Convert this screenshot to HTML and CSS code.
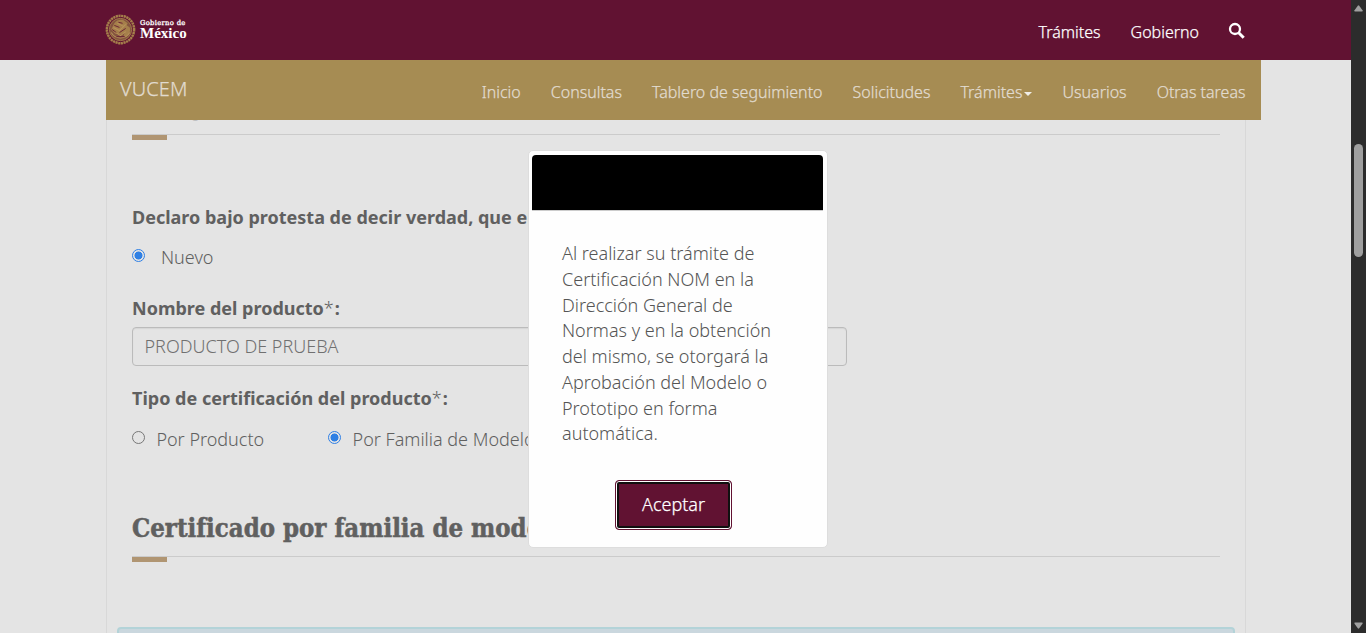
FILE: index.html
```html
<!DOCTYPE html>
<html lang="es">
<head>
<meta charset="utf-8">
<title>VUCEM</title>
<link rel="stylesheet" href="styles.css">
</head>
<body>
<div class="window">
  <div class="viewport">
    <header class="gov-bar">
      <a class="brand">
        <svg class="seal" viewBox="0 0 30 30">
          <circle cx="15" cy="15" r="13.2" fill="none" stroke="#a57f4b" stroke-width="2.4" stroke-dasharray="2.1 .5"/>
          <circle cx="15" cy="15" r="10.8" fill="#84543f" stroke="#a57f4b" stroke-width=".8"/>
          <path d="M9 9c2-3 6-4 9-3l4 3-1 2 3 2c1 4-1 7-4 9l-2-1 1-3-4 2-5-1-4-4z" fill="#a57f4b"/>
          <path d="M6 18c4 7 14 7 18 0M8 13l6 3 6-6M9 17l6 4 5-4M12 9l6 3" fill="none" stroke="#b8925b" stroke-width="1"/>
          <path d="M9 11l5 2M14 18l6-4M7 15l4 3M13 8l4 1M11 22l8 0" stroke="#611232" stroke-width=".8"/>
        </svg>
        <span class="wordmark"><span class="wm-small">Gobierno de</span><span class="wm-big">México</span></span>
      </a>
      <nav class="gov-links">
        <a>Trámites</a><a>Gobierno</a>
        <svg class="search" viewBox="0 0 18 18"><circle cx="7" cy="7" r="5" fill="none" stroke="#fff" stroke-width="2.3"/><path d="M10.7 10.7l5 5" stroke="#fff" stroke-width="3"/></svg>
      </nav>
    </header>
    <div class="subnav">
      <span class="sub-brand">VUCEM</span>
      <nav class="sub-links">
        <a>Inicio</a><a>Consultas</a><a>Tablero de seguimiento</a><a>Solicitudes</a><a>Trámites<i class="caret"></i></a><a>Usuarios</a><a>Otras tareas</a>
      </nav>
    </div>
    <main class="content">
      <h2 class="section-title first">g</h2>
      <p class="label declare"><span>Declaro bajo protesta de decir verdad, que el producto es</span></p>
      <div class="options new"><label class="option"><i class="radio on"></i><span>Nuevo</span></label></div>
      <p class="label name">Nombre del producto<span class="req">*</span>:</p>
      <div class="field">PRODUCTO DE PRUEBA</div>
      <p class="label kind">Tipo de certificación del producto<span class="req">*</span>:</p>
      <div class="options kinds">
        <label class="option"><i class="radio"></i><span>Por Producto</span></label>
        <label class="option"><i class="radio on"></i><span>Por Familia de Modelos</span></label>
      </div>
      <h2 class="section-title second">Certificado por familia de modelos</h2>
      <div class="alert"></div>
    </main>
    <section class="modal">
      <div class="modal-head"></div>
      <p class="modal-text">Al realizar su trámite de Certificación NOM en la Dirección General de Normas y en la obtención del mismo, se otorgará la Aprobación del Modelo o Prototipo en forma automática.</p>
      <button class="accept">Aceptar</button>
    </section>
  </div>
  <div class="scrollbar">
    <svg class="arrow" viewBox="0 0 9 7"><path d="M1 6.5Q0 6.5 .5 5.3L3.8.7Q4.5 0 5.2.7L8.5 5.3Q9 6.5 8 6.5z" fill="#a0a0a0"/></svg>
    <i class="thumb"></i>
    <svg class="arrow down" viewBox="0 0 9 7"><path d="M1 .5Q0 .5.5 1.7L3.8 6.3Q4.5 7 5.2 6.3L8.5 1.7Q9 .5 8 .5z" fill="#a0a0a0"/></svg>
  </div>
</div>
</body>
</html>
```
FILE: styles.css
```css
* { box-sizing: border-box; }
body { margin: 0; font: 300 18px/25.71px "Noto Sans", "Open Sans", sans-serif; color: #606060; }
.window { display: flex; height: 633px; overflow: hidden; }
.viewport { position: relative; flex: 1; background: #e4e4e4; overflow: hidden; }

.gov-bar { display: flex; justify-content: space-between; height: 60px; padding: 0 105px; background: #611232; color: #fff; }
.brand { display: flex; gap: 4px; padding-top: 14px; }
.seal { width: 31px; height: 31px; }
.wordmark { display: flex; flex-direction: column; padding-top: 5px; font-family: "DejaVu Serif", serif; }
.wm-small { font-size: 6.8px; line-height: 9px; letter-spacing: .3px; -webkit-text-stroke: .3px #fff; font-weight: 400; }
.wm-big { font: 700 15px/11px "Liberation Serif", serif; }
.gov-links { display: flex; gap: 30px; font-size: 16px; line-height: 24px; padding-top: 20px; -webkit-text-stroke: .25px #fff; }
.gov-links a { position: relative; left: 1px; }
.search { width: 18px; height: 18px; margin-top: 2px; }

.subnav { display: flex; justify-content: space-between; width: 1155px; height: 60px; margin-left: 106px; padding: 0 15.5px 0 14px; background: #a68c53; color: #e1dbcf; position: relative; z-index: 1; -webkit-text-stroke: .25px #e1dbcf; }
.sub-brand { font-size: 20px; line-height: 28px; padding-top: 15px; letter-spacing: .1px; }
.sub-links { display: flex; gap: 30px; font-size: 16px; line-height: 24px; padding-top: 20px; }
.caret { display: inline-block; vertical-align: middle; margin-left: 2px; border: 4px solid transparent; border-top-color: #f0ede6; border-bottom: 0; }

.content { display: flow-root; width: 1140px; height: 573px; margin-left: 106px; padding: 0 25px; border: solid #d8d8d8; border-width: 0 1px; }
.section-title { position: relative; margin: 0; height: 50px; font: 700 25.5px/38px "DejaVu Serif Condensed", "DejaVu Serif", serif; letter-spacing: 0; -webkit-text-stroke: .5px #606060; border-bottom: 1px solid #cbcbcb; white-space: nowrap; }
.section-title::after { content: ""; position: absolute; left: 0; top: 50px; width: 35px; height: 5px; background: #b09572; }
.first { margin-top: -35px; padding-left: 56px; line-height: 42px; }
.second { margin-top: 54px; line-height: 42px; }
.label { margin: 0; font-weight: 700; height: 26px; white-space: nowrap; }
.req { font-weight: 300; padding-right: 1px; }
.declare { margin-top: 70px; }
.new { margin-top: 14px; --gap: 16px; }
.option { display: flex; gap: var(--gap); height: 26px; white-space: nowrap; }
.radio { width: 13px; height: 13px; margin-top: 4px; border: 1px solid #777; border-radius: 50%; }
.radio.on { border: 1.5px solid #2f80e4; background: radial-gradient(circle, #2f80e4 3.7px, #e4e4e4 4.3px); }
.name { margin-top: 25px; }
.field { width: 715px; height: 39px; margin-top: 5px; padding: 6px 12px 6px 11.5px; border: 1px solid #bbb; border-radius: 4px; box-shadow: inset 0 1px 1px #d5d5d5; color: #707070; }
.kind { margin-top: 20px; }
.kinds { display: flex; gap: 64px; margin-top: 15px; --gap: 11.4px; }
.alert { height: 60px; margin: 70px -15px 0; border: 2px solid #b3d3d8; border-radius: 4px; background: #cad7de; }

.modal { position: absolute; left: 528px; top: 150px; width: 300px; height: 398px; padding: 4px 4px 4px 3px; background: #fefefe; border: 1px solid #ddd; border-radius: 5px; color: #555; }
.modal-head { height: 56px; background: #000; border-bottom: 1px solid #ccc; border-radius: 4px 4px 0 0; }
.modal-text { margin: 30.3px 43px 0 30px; }
.accept { display: block; width: 117px; height: 50px; margin: 33px 0 0 83px; padding: 0; border: 1px solid #611232; border-radius: 4px; background: #611232; box-shadow: inset 0 0 0 1px #fff, inset 0 0 0 3px #101010; color: #fff; font: 300 18px/25px "Noto Sans", sans-serif; -webkit-text-stroke: .25px #fff; }

.scrollbar { display: flex; flex-direction: column; align-items: center; width: 15px; padding: 5px 0 4px; background: #2c2c2c; }
.arrow { width: 9px; height: 7px; }
.thumb { width: 9px; height: 113px; margin-top: 132px; border-radius: 5px; background: #9f9f9f; }
.down { margin-top: auto; }
```
